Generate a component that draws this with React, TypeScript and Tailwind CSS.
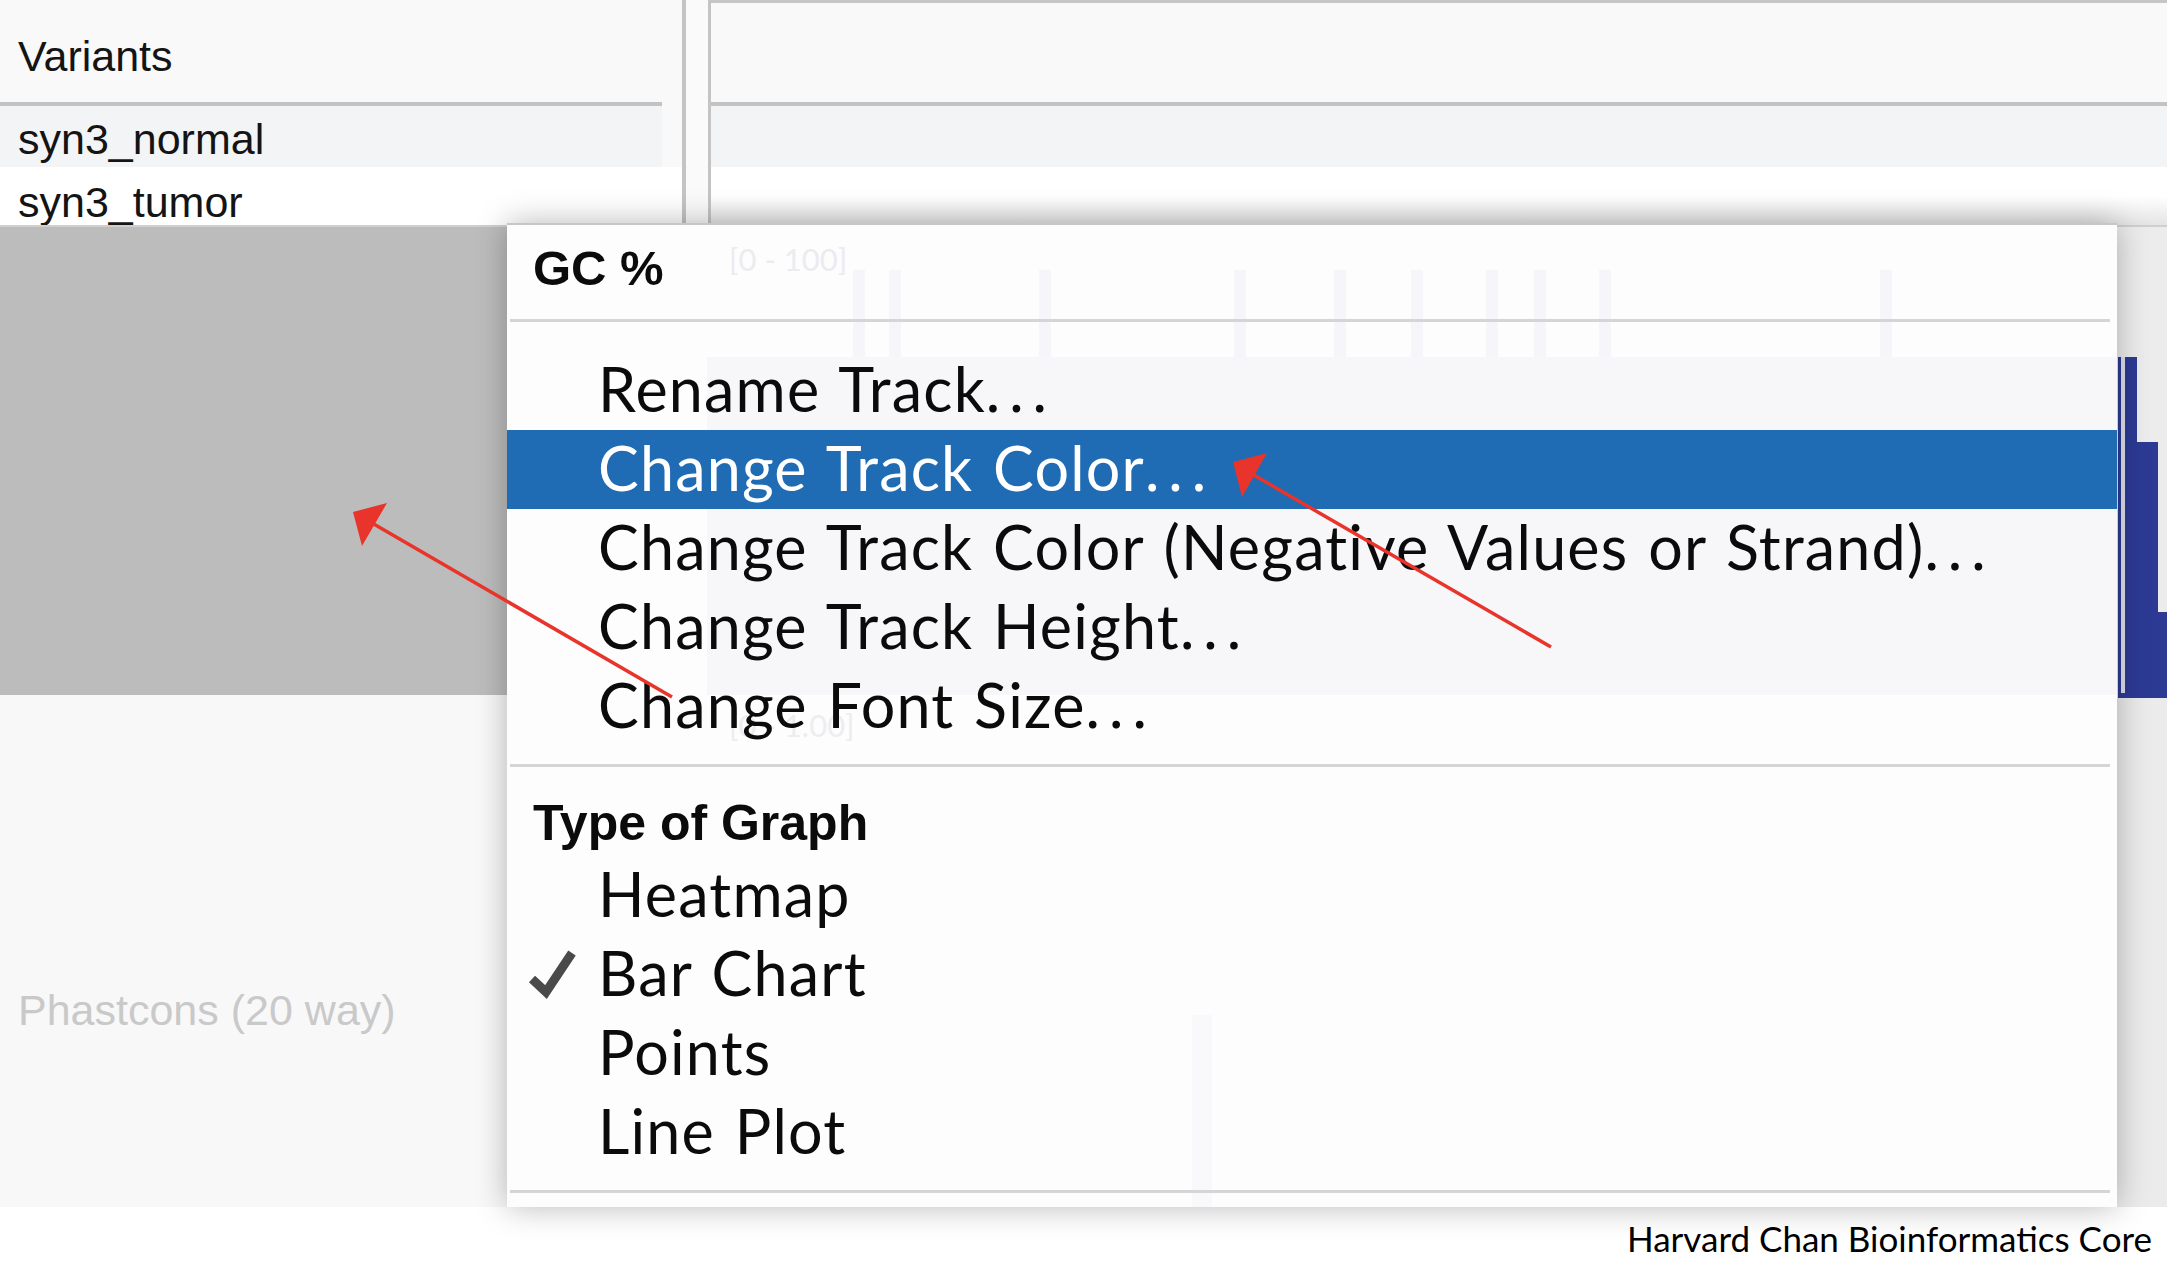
const nameText = "pl-[18px] text-[43px] leading-[61px] text-[#141414] whitespace-nowrap";

function MenuItem({ label, active, checked }: { label: string; active?: boolean; checked?: boolean }) {
  const dots = label.endsWith("...");
  const base = dots ? label.slice(0, -3) : label;
  return (
    <div
      className={`relative h-[79px] shrink-0 pl-[91px] text-[61px] leading-[75px] tracking-[1.2px] whitespace-nowrap [word-spacing:3px] ${
        active ? "bg-[#206cb4] text-white" : "text-[#0b0b0b]"
      }`}
    >
      {checked && (
        <svg className="absolute left-0 top-0" width="90" height="79" viewBox="0 0 90 79">
          <path d="M25 44 L39 57 L65 18" fill="none" stroke="#4a4a4a" strokeWidth="9" strokeLinejoin="miter" />
        </svg>
      )}
      {base}
      {dots && <span className="tracking-[9px]">...</span>}
    </div>
  );
}

function Separator() {
  return <div className="relative ml-[3px] mr-[7px] h-[3px] shrink-0 bg-[#d5d5d7]" />;
}

// faint chart bars that show through the popup
function GhostChart() {
  const thin = [346, 382, 532, 727, 827, 904, 979, 1027, 1092, 1373];
  return (
    <div className="absolute inset-0">
      <svg width="1610" height="982" className="absolute left-0 top-0">
        {thin.map((x) => (
          <rect key={x} x={x} y={45} width={12} height={87} fill="#f6f6fa" />
        ))}
        <rect x={200} y={132} width={1410} height={338} fill="#f7f7fa" />
        <rect x={685} y={790} width={20} height={192} fill="#f9f9fb" />
      </svg>
      <span className="absolute left-[222px] top-[19px] text-[31px] leading-[31px] text-[#ebebf0] whitespace-nowrap">
        [0 - 100]
      </span>
      <span className="absolute left-[222px] top-[485px] text-[31px] leading-[31px] text-[#ededf1] whitespace-nowrap">
        [0 - 1.00]
      </span>
    </div>
  );
}

export default function App() {
  return (
    <div className="relative h-[1266px] w-[2167px] overflow-hidden bg-white font-['Liberation_Sans',Arial,sans-serif]">
      <div className="flex h-[1207px]">
        {/* track name panel */}
        <div className="flex w-[682px] shrink-0 flex-col bg-[#f9f9f9]">
          <div className={`h-[102px] shrink-0 pt-[26px] ${nameText}`}>Variants</div>
          <div className="h-[4px] w-[662px] shrink-0 bg-[#c3c3c3]" />
          <div className={`h-[61px] w-[662px] shrink-0 bg-[#f3f4f5] pt-[3px] ${nameText}`}>syn3_normal</div>
          <div className={`h-[58px] shrink-0 overflow-hidden bg-white pt-[5px] ${nameText}`}>syn3_tumor</div>
          <div className="h-[2px] shrink-0 bg-[#cfcfcf]" />
          <div className="h-[468px] shrink-0 bg-[#bcbcbc]" />
          <div className="flex-1 bg-[#f8f8f9] pl-[18px] pt-[285px] text-[43px] leading-[61px] text-[#c9c9c9] whitespace-nowrap">
            Phastcons (20 way)
          </div>
        </div>

        <div className="w-[4px] shrink-0 bg-[#c4c4c4]" />
        <div className="w-[22px] shrink-0 bg-[#fafafa]" />
        <div className="w-[3px] shrink-0 bg-[#c4c4c4]" />

        {/* data panel */}
        <div className="flex flex-1 flex-col">
          <div className="h-[3px] shrink-0 bg-[#c6c6c6]" />
          <div className="h-[99px] shrink-0 bg-[#f9f9f9]" />
          <div className="h-[4px] shrink-0 bg-[#c3c3c3]" />
          <div className="h-[61px] shrink-0 bg-[#f3f4f5]" />
          <div className="h-[58px] shrink-0 bg-gradient-to-b from-white via-white to-[#e4e4e4]" />
          <div className="h-[2px] shrink-0 bg-[#cfcfcf]" />
          <div className="h-[130px] shrink-0 bg-[#ececec]" />
          <div className="flex h-[341px] shrink-0 items-end justify-end bg-[#ececec]">
            <div className="h-[341px] w-[3px] bg-[#2d3a94]" />
            <div className="flex h-[341px] w-[4px] flex-col">
              <div className="h-[336px] bg-[#dfe0ea]" />
              <div className="flex-1 bg-[#2d3a94]" />
            </div>
            <div className="h-[341px] w-[12px] bg-[#2d3a94]" />
            <div className="h-[256px] w-[21px] bg-[#2d3a94]" />
            <div className="h-[86px] w-[9px] bg-[#2d3a94]" />
          </div>
          <div className="flex-1 bg-[#ebebeb]" />
        </div>
      </div>

      {/* footer */}
      <div className="flex h-[59px] items-center justify-end pr-[15px] pt-[4px] font-['Lato',sans-serif] text-[35px] text-black">
        Harvard Chan Bioinformatics Core
      </div>

      {/* popup menu */}
      <div className="absolute left-[507px] top-[223px] flex h-[984px] w-[1610px] flex-col overflow-hidden border-t-2 border-[#c6c6c6] bg-[#fdfdfd] font-['Lato',sans-serif] shadow-[0_0_30px_rgba(0,0,0,0.28)]">
        <GhostChart />
        <div className="relative flex h-[94px] shrink-0 items-center pb-[6px] pl-[26px] font-['Liberation_Sans',Arial,sans-serif] text-[49px] font-bold text-[#0b0b0b]">
          GC %
        </div>
        <Separator />
        <div className="h-[29px] shrink-0" />
        <MenuItem label="Rename Track..." />
        <MenuItem label="Change Track Color..." active />
        <MenuItem label="Change Track Color (Negative Values or Strand)..." />
        <MenuItem label="Change Track Height..." />
        <MenuItem label="Change Font Size..." />
        <div className="h-[18px] shrink-0" />
        <Separator />
        <div className="relative mt-[23px] flex h-[66px] shrink-0 items-center pl-[26px] font-['Liberation_Sans',Arial,sans-serif] text-[50px] font-bold text-[#0b0b0b]">
          Type of Graph
        </div>
        <MenuItem label="Heatmap" />
        <MenuItem label="Bar Chart" checked />
        <MenuItem label="Points" />
        <MenuItem label="Line Plot" />
        <div className="h-[18px] shrink-0" />
        <Separator />
      </div>

      {/* annotation arrows */}
      <svg className="pointer-events-none absolute left-0 top-0" width="2167" height="1266">
        <line x1="672" y1="697" x2="372" y2="523" stroke="#e8342a" strokeWidth="3.5" />
        <polygon points="353,512 387,503 362,546" fill="#e8342a" />
        <line x1="1551" y1="647" x2="1252" y2="474" stroke="#e8342a" strokeWidth="3.5" />
        <polygon points="1233,462 1267,453 1242,497" fill="#e8342a" />
      </svg>
    </div>
  );
}
